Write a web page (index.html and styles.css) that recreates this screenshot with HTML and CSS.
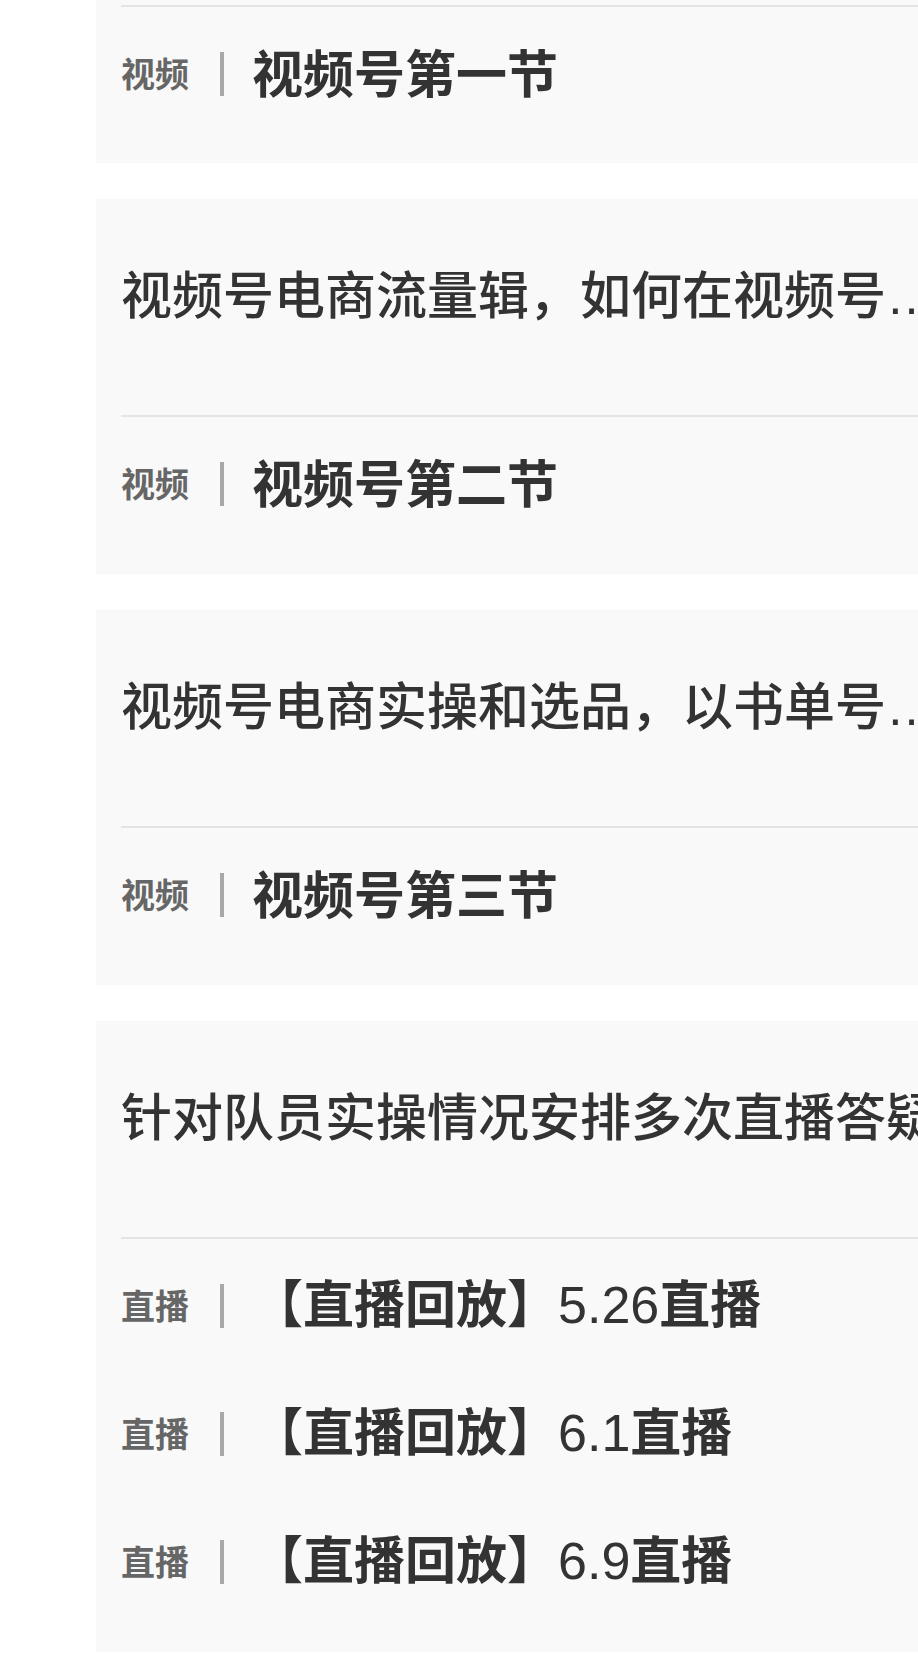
FILE: index.html
```html
<!DOCTYPE html>
<html lang="zh-CN">
<head>
<meta charset="utf-8">
<title>课程目录</title>
<link rel="stylesheet" href="styles.css">
</head>
<body>
<main class="list">
  <section class="card card--cut">
    <div class="divider"></div>
    <div class="row">
      <span class="tag">视频</span>
      <span class="sep"></span>
      <span class="row-title">视频号第一节</span>
    </div>
  </section>

  <section class="card">
    <h2 class="card-title">视频号电商流量辑，如何在视频号…</h2>
    <div class="divider"></div>
    <div class="row">
      <span class="tag">视频</span>
      <span class="sep"></span>
      <span class="row-title">视频号第二节</span>
    </div>
  </section>

  <section class="card">
    <h2 class="card-title">视频号电商实操和选品，以书单号…</h2>
    <div class="divider"></div>
    <div class="row">
      <span class="tag">视频</span>
      <span class="sep"></span>
      <span class="row-title">视频号第三节</span>
    </div>
  </section>

  <section class="card">
    <h2 class="card-title">针对队员实操情况安排多次直播答疑</h2>
    <div class="divider"></div>
    <div class="row">
      <span class="tag">直播</span>
      <span class="sep"></span>
      <span class="row-title">【直播回放】<span class="num">5.26</span>直播</span>
    </div>
    <div class="row">
      <span class="tag">直播</span>
      <span class="sep"></span>
      <span class="row-title">【直播回放】<span class="num">6.1</span>直播</span>
    </div>
    <div class="row">
      <span class="tag">直播</span>
      <span class="sep"></span>
      <span class="row-title">【直播回放】<span class="num">6.9</span>直播</span>
    </div>
  </section>
</main>
</body>
</html>
```

FILE: styles.css
```css
html, body {
  margin: 0;
  padding: 0;
  background: #ffffff;
  overflow: hidden;
}

body {
  font-family: "Noto Sans CJK SC", "Noto Sans", sans-serif;
  color: #333333;
}

.list {
  display: flex;
  flex-direction: column;
  gap: 36px;
  padding-left: 96px;
}

.card {
  width: 1000px;
  background: #f9f9f9;
  padding: 0 0 29px 25px;
  box-sizing: border-box;
  box-shadow: 0 0 2px rgba(0, 0, 0, 0.025);
  overflow: hidden;
}

.card--cut {
  padding-top: 5px;
  padding-bottom: 28px;
}

.card-title {
  margin: 0;
  padding: 63px 0 83px;
  font-family: "Liberation Sans", "Noto Sans CJK SC", sans-serif;
  font-size: 51px;
  line-height: 70px;
  font-weight: 500;
  color: #333333;
  white-space: nowrap;
  overflow: hidden;
}

.divider {
  height: 2px;
  background: #e4e4e4;
}

.row {
  height: 128px;
  display: flex;
  align-items: center;
  white-space: nowrap;
}

.tag {
  font-size: 34px;
  line-height: 40px;
  font-weight: 700;
  color: #666666;
  margin-top: 4px;
}

.sep {
  width: 4px;
  height: 44px;
  background: #a8a8a8;
  margin: 6px 28px 0 31px;
}

.row-title {
  font-size: 51px;
  line-height: 70px;
  font-weight: 700;
  color: #333333;
}

.num {
  font-family: "Liberation Sans", Arial, sans-serif;
  font-weight: 400;
  font-size: 52px;
}
```
